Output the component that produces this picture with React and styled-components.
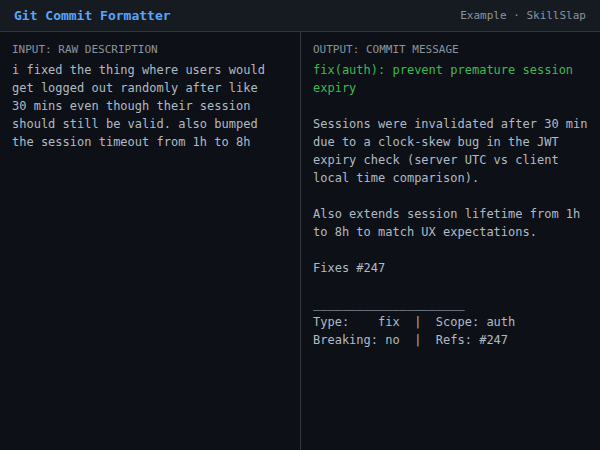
import styled, { createGlobalStyle } from "styled-components";

const GlobalStyle = createGlobalStyle`
  html, body {
    margin: 0;
    padding: 0;
    background: #0d1117;
  }
  * {
    box-sizing: border-box;
  }
`;

const rawInput =
  "i fixed the thing where users would get logged out randomly after like 30 mins even though their session should still be valid. also bumped the session timeout from 1h to 8h";

const commitBody = `Sessions were invalidated after 30 min
due to a clock-skew bug in the JWT
expiry check (server UTC vs client
local time comparison).

Also extends session lifetime from 1h
to 8h to match UX expectations.

Fixes #247

_____________________
Type:    fix  |  Scope: auth
Breaking: no  |  Refs: #247`;

function App() {
  return (
    <>
      <GlobalStyle />
      <Page>
        <Header>
          <Title>Git Commit Formatter</Title>
          <Meta>Example · SkillSlap</Meta>
        </Header>
        <Columns>
          <Panel>
            <Label>INPUT: RAW DESCRIPTION</Label>
            <RawText>{rawInput}</RawText>
          </Panel>
          <Panel $divider>
            <Label>OUTPUT: COMMIT MESSAGE</Label>
            <Subject>fix(auth): prevent premature session{"\n"}expiry</Subject>
            <Body>{"\n" + commitBody}</Body>
          </Panel>
        </Columns>
      </Page>
    </>
  );
}

const Page = styled.div`
  width: 600px;
  height: 450px;
  display: flex;
  flex-direction: column;
  background: #0d1117;
  font-family: "DejaVu Sans Mono", "Liberation Mono", monospace;
  overflow: hidden;
`;

const Header = styled.div`
  height: 32px;
  flex: none;
  display: flex;
  align-items: center;
  justify-content: space-between;
  padding: 0 14px;
  background: #161b22;
  border-bottom: 1px solid #30363d;
`;

const Title = styled.div`
  font-size: 13px;
  font-weight: bold;
  color: #58a6ff;
`;

const Meta = styled.div`
  font-size: 11px;
  color: #8b949e;
`;

const Columns = styled.div`
  flex: 1;
  display: grid;
  grid-template-columns: 300px 1fr;
`;

const Panel = styled.div`
  padding: 10px 12px;
  border-left: ${(p) => (p.$divider ? "1px solid #30363d" : "none")};
`;

const Label = styled.div`
  font-size: 11px;
  line-height: 16px;
  color: #8b949e;
  margin-bottom: 3px;
`;

const RawText = styled.div`
  max-width: 36ch;
  font-size: 12px;
  line-height: 18px;
  color: #b1bac4;
`;

const Subject = styled.div`
  font-size: 12px;
  line-height: 18px;
  color: #3fb950;
  white-space: pre;
`;

const Body = styled.div`
  font-size: 12px;
  line-height: 18px;
  color: #b1bac4;
  white-space: pre;
`;

export default App;
